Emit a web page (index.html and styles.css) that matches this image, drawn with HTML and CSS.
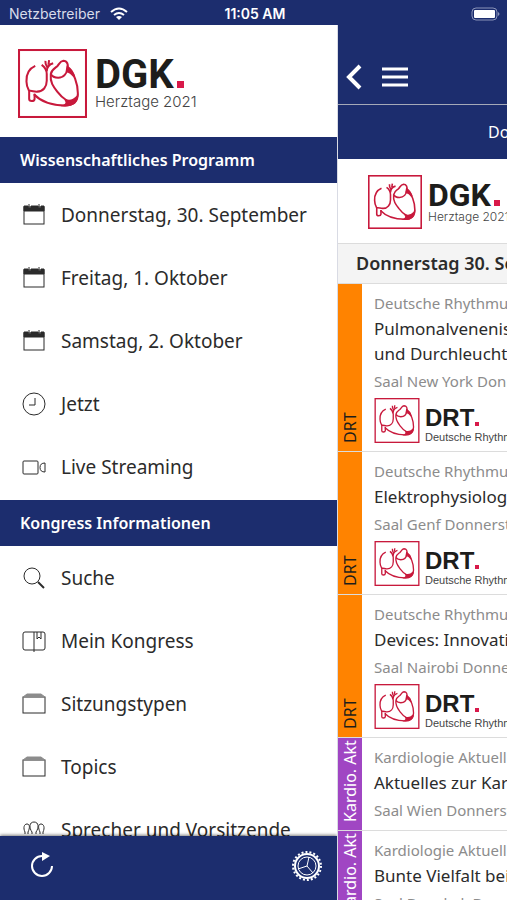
FILE: index.html
```
<!DOCTYPE html>
<html lang="de">
<head>
    <meta charset="UTF-8">
    <title>DGK Herztage 2021</title>
    <meta name="viewport" content="width=device-width, initial-scale=1.0">
    <link rel="stylesheet" href="styles.css">
</head>
<body>

<!-- Symbole, die mehrfach verwendet werden -->
<svg class="symbols" aria-hidden="true">
    <symbol id="heart" viewBox="12 14 204 204">
        <rect x="15" y="17" width="198" height="198"/>
        <path d="M63 64C45 72 36 90 37 110c0 14 5 22 8 28v24c0 8 15 8 16 0v-16"/>
        <path d="M45 138c8 -2 14 3 24 2c17 0 28 -14 28 -32V88c0 -12 -5 -20 -15 -27"/>
        <path d="M93 49c-1 8 2 14 6 20M116 56c-10 3 -19 10 -19 24M104 47l-2 14"/>
        <path d="M109 88c2 -12 10 -16 18 -22c6 -5 8 -16 19 -17c12 0 15 12 13 22c-2 15 -12 28 -28 28c-10 0 -18 -3 -22 -11z"/>
        <path d="M109 90c-3 22 8 36 19 50c9 12 18 20 29 27"/>
        <path d="M159 69c18 14 30 48 30 76c0 24 -12 36 -38 36c-42 0 -72 -12 -92 -33"/>
        <path class="fill" d="M152 165c12 4 26 0 35 -10c-2 17 -14 27 -38 26c7 -4 9 -10 3 -16zM158 67c10 6 16 16 20 28c-8 -10 -14 -14 -22 -16z"/>
    </symbol>
    <symbol id="calendar" viewBox="0 0 24 24">
        <rect x="2" y="4" width="20" height="17"/>
        <path class="fill" d="M2 3h4v2h3V3h7v2h3V3h3v5H2z"/>
        <path d="M7 1v4M17 1v4"/>
    </symbol>
    <symbol id="folder" viewBox="0 0 24 24">
        <rect x="1" y="5" width="22" height="16"/>
        <path class="grey" d="M1 5l4 -3h14l4 3z"/>
    </symbol>
</svg>

<header class="statusbar">
    <span class="carrier">Netzbetreiber
        <svg viewBox="0 0 18 14" aria-hidden="true">
            <path d="M1 5q8 -7 16 0M4 8q5 -4 10 0"/>
            <path class="fill" d="M6 10q3 -2 6 0l-3 3z"/>
        </svg>
    </span>
    <time>11:05 AM</time>
    <svg class="battery" viewBox="0 0 30 14" aria-hidden="true">
        <rect class="shell" x="1" y="1" width="25" height="12" rx="4"/>
        <rect class="charge" x="3" y="3" width="21" height="8" rx="1"/>
        <path class="cap" d="M27 5q3 2 0 4z"/>
    </svg>
</header>

<div class="app">
    <aside class="drawer">
        <div class="brand">
            <svg class="heart" aria-hidden="true"><use href="#heart"/></svg>
            <div>
                <strong>DGK</strong>
                <span>Herztage 2021</span>
            </div>
        </div>

        <nav class="menu">
            <h2>Wissenschaftliches Programm</h2>
            <ul>
                <li><a href="#"><svg class="icon" aria-hidden="true"><use href="#calendar"/></svg>Donnerstag, 30. September</a></li>
                <li><a href="#"><svg class="icon" aria-hidden="true"><use href="#calendar"/></svg>Freitag, 1. Oktober</a></li>
                <li><a href="#"><svg class="icon" aria-hidden="true"><use href="#calendar"/></svg>Samstag, 2. Oktober</a></li>
                <li><a href="#"><svg class="icon" viewBox="0 0 24 24" aria-hidden="true"><circle cx="12" cy="12" r="11"/><path d="M13 6v7H7"/></svg>Jetzt</a></li>
                <li><a href="#"><svg class="icon" viewBox="0 0 24 24" aria-hidden="true"><rect x="1" y="6" width="15" height="13" rx="1"/><path d="M23 8v9q-5 0 -5 -4.500t5 -4.500z"/></svg>Live Streaming</a></li>
            </ul>
            <h2>Kongress Informationen</h2>
            <ul>
                <li><a href="#"><svg class="icon" viewBox="0 0 24 24" aria-hidden="true"><circle cx="10" cy="10" r="8"/><path class="handle" d="M16 16l6 6"/></svg>Suche</a></li>
                <li><a href="#"><svg class="icon" viewBox="0 0 24 24" aria-hidden="true"><rect x="1" y="3" width="22" height="18" rx="2"/><path d="M12 3v20M15 3v7l2 -2l2 2V3"/></svg>Mein Kongress</a></li>
                <li><a href="#"><svg class="icon" aria-hidden="true"><use href="#folder"/></svg>Sitzungstypen</a></li>
                <li><a href="#"><svg class="icon" aria-hidden="true"><use href="#folder"/></svg>Topics</a></li>
                <li><a href="#"><svg class="icon" viewBox="0 0 24 24" aria-hidden="true"><path d="M10 16v-2c-3 -4 -3 -10 2 -10s5 6 2 10v2M3 16v-2c-2 -4 -1 -8 2 -8s3 4 1 8v2M21 16v-2c2 -4 1 -8 -2 -8s-3 4 -1 8v2"/></svg>Sprecher und Vorsitzende</a></li>
            </ul>
        </nav>

        <footer class="toolbar">
            <button type="button" aria-label="Aktualisieren">
                <svg viewBox="0 0 32 32"><path d="M26 16a10 10 0 1 1 -10 -10"/><path class="fill" d="M16 2l8 4l-8 5z"/></svg>
            </button>
            <button type="button" aria-label="Einstellungen">
                <svg viewBox="0 0 32 32">
                    <circle class="teeth" cx="16" cy="16" r="14"/>
                    <circle cx="16" cy="16" r="12"/>
                    <circle class="thin" cx="16" cy="16" r="9"/>
                    <path class="thin" d="M16 16l2 -9M16 16l-9 3M16 16l6 7"/>
                </svg>
            </button>
        </footer>
    </aside>

    <main class="page">
        <div class="navbar">
            <button type="button" aria-label="Zurück">
                <svg class="back" viewBox="0 0 16 26"><path d="M14 2L3 13l11 11"/></svg>
            </button>
            <button type="button" aria-label="Menü">
                <svg class="burger" viewBox="0 0 26 20"><path d="M0 2h26M0 10h26M0 18h26"/></svg>
            </button>
        </div>
        <div class="daybar">Donnerstag</div>
        <div class="brand small">
            <svg class="heart" aria-hidden="true"><use href="#heart"/></svg>
            <div>
                <strong>DGK</strong>
                <span>Herztage 2021</span>
            </div>
        </div>
        <h1>Donnerstag 30. September</h1>

        <article class="session drt">
            <div class="tag">DRT</div>
            <div class="info">
                <p>Deutsche Rhythmus Tage</p>
                <h3>Pulmonalvenenisolation<br>und Durchleuchtung</h3>
                <p>Saal New York Donnerstag</p>
                <div class="brand mini">
                    <svg class="heart" aria-hidden="true"><use href="#heart"/></svg>
                    <div>
                        <strong>DRT</strong>
                        <span>Deutsche Rhythmus Tage</span>
                    </div>
                </div>
            </div>
        </article>
        <article class="session drt">
            <div class="tag">DRT</div>
            <div class="info">
                <p>Deutsche Rhythmus Tage</p>
                <h3>Elektrophysiologie</h3>
                <p>Saal Genf Donnerstag</p>
                <div class="brand mini">
                    <svg class="heart" aria-hidden="true"><use href="#heart"/></svg>
                    <div>
                        <strong>DRT</strong>
                        <span>Deutsche Rhythmus Tage</span>
                    </div>
                </div>
            </div>
        </article>
        <article class="session drt">
            <div class="tag">DRT</div>
            <div class="info">
                <p>Deutsche Rhythmus Tage</p>
                <h3>Devices: Innovationen</h3>
                <p>Saal Nairobi Donnerstag</p>
                <div class="brand mini">
                    <svg class="heart" aria-hidden="true"><use href="#heart"/></svg>
                    <div>
                        <strong>DRT</strong>
                        <span>Deutsche Rhythmus Tage</span>
                    </div>
                </div>
            </div>
        </article>
        <article class="session kardio">
            <div class="tag">Kardio. Akt</div>
            <div class="info">
                <p>Kardiologie Aktuell</p>
                <h3>Aktuelles zur Kardiologie</h3>
                <p>Saal Wien Donnerstag</p>
            </div>
        </article>
        <article class="session kardio">
            <div class="tag">Kardio. Akt</div>
            <div class="info">
                <p>Kardiologie Aktuell</p>
                <h3>Bunte Vielfalt bei</h3>
                <p>Saal Bangkok Donnerstag</p>
            </div>
        </article>
    </main>
</div>

</body>
</html>
```
FILE: styles.css
```
* {
    box-sizing: border-box;
}

body {
    margin: 0;
    height: 100vh;
    display: flex;
    flex-direction: column;
    overflow: hidden;
    background-color: #fff;
    color: #2b2b2b;
    font-family: "Noto Sans", "Open Sans", sans-serif;
}

h1, h2, h3, p, ul {
    margin: 0;
    padding: 0;
}

svg {
    display: block;
    fill: none;
    stroke: currentColor;
}

svg .fill {
    fill: currentColor;
}

button {
    padding: 0;
    border: none;
    background: none;
    color: #fff;
    cursor: pointer;
}

.symbols {
    position: absolute;
    width: 0;
    height: 0;
}

/* Statusleiste */
.statusbar {
    flex: none;
    display: grid;
    grid-template-columns: 1fr auto 1fr;
    align-items: center;
    height: 25px;
    padding: 2px 6px 0 9px;
    background-color: #1c2d6e;
    color: #fff;
    font-family: Inter, sans-serif;
    font-size: 14px;
}

.statusbar time {
    font-weight: 600;
}

.carrier {
    display: flex;
    align-items: center;
    gap: 10px;
    color: #d8dcea;
}

.carrier svg {
    width: 18px;
    height: 14px;
    color: #fff;
    stroke-width: 2;
}

.carrier .fill {
    stroke: none;
}

.battery {
    justify-self: end;
    width: 30px;
    height: 14px;
}

.battery .shell {
    stroke: #8a94b8;
}

.battery .charge {
    fill: #fff;
    stroke: none;
}

.battery .cap {
    fill: #8a94b8;
    stroke: none;
}

.app {
    flex: 1;
    min-height: 0;
    display: grid;
    grid-template-columns: 1fr 170px;
}

/* Seitenmenü */
.drawer {
    display: flex;
    flex-direction: column;
    min-width: 0;
    min-height: 0;
}

.brand {
    flex: none;
    display: flex;
    gap: 8px;
    height: 112px;
    padding: 24px 18px;
    font-family: Inter, sans-serif;
    color: #1d1d1b;
    white-space: nowrap;
}

.brand strong,
.brand span {
    display: block;
}

.brand strong {
    margin-top: 8px;
    font-family: Roboto, sans-serif;
    font-size: 40px;
    line-height: 36px;
}

/* roter Punkt hinter dem Kürzel */
.brand strong::after {
    content: "";
    display: inline-block;
    width: 7px;
    height: 7px;
    margin-left: 3px;
    background-color: #d8194a;
}

.brand span {
    font-size: 15px;
    line-height: 18px;
    font-weight: 300;
    color: #444;
}

.heart {
    flex: none;
    width: 69px;
    height: 69px;
    color: #c8193c;
    stroke-width: 6;
}

.menu {
    flex: 1;
    min-height: 0;
    overflow: hidden;
}

.menu h2 {
    padding: 0 20px;
    background-color: #1c2d6e;
    color: #fff;
    font-size: 16px;
    line-height: 46px;
    font-weight: 600;
}

.menu ul {
    padding-bottom: 2px;
    list-style: none;
}

.menu a {
    display: flex;
    align-items: center;
    gap: 15px;
    height: 63px;
    padding: 0 22px;
    color: inherit;
    font-size: 19px;
    text-decoration: none;
    white-space: nowrap;
}

.icon {
    flex: none;
    width: 24px;
    height: 24px;
}

.icon .handle {
    stroke-width: 2;
}

.grey {
    fill: #8c8c8c;
    stroke: #8c8c8c;
}

.toolbar {
    flex: none;
    display: flex;
    justify-content: space-between;
    align-items: center;
    height: 64px;
    padding: 0 14px 4px 26px;
    background-color: #1c2d6e;
    box-shadow: 0 -1px 3px rgba(0, 0, 0, 0.5);
}

.toolbar svg {
    width: 32px;
    height: 32px;
    stroke-width: 2;
}

.toolbar .fill {
    stroke: none;
}

.toolbar .thin {
    stroke-width: 1;
}

.teeth {
    stroke-dasharray: 2 2;
}

/* Programmseite */
.page {
    min-width: 0;
    overflow: hidden;
    border-left: 1px solid #d9dbe4;
    white-space: nowrap;
}

.navbar {
    display: flex;
    align-items: center;
    gap: 20px;
    height: 80px;
    padding: 24px 8px 0;
    background-color: #1c2d6e;
    border-bottom: 1px solid #a5a9b8;
}

.back {
    width: 16px;
    height: 26px;
    stroke-width: 4;
}

.burger {
    width: 26px;
    height: 20px;
    stroke-width: 3;
}

.daybar {
    height: 54px;
    padding-left: 150px;
    background-color: #1c2d6e;
    color: #fff;
    font-size: 16px;
    line-height: 54px;
}

.brand.small {
    gap: 6px;
    height: 84px;
    padding: 16px 30px;
}

.small .heart {
    width: 54px;
    height: 54px;
}

.small strong {
    margin-top: 6px;
    font-size: 32px;
    line-height: 28px;
}

.small strong::after {
    width: 6px;
    height: 6px;
}

.small span {
    font-size: 12px;
    line-height: 16px;
}

.page h1 {
    padding-left: 18px;
    background-color: #f4f4f4;
    border: solid #dcdcdc;
    border-width: 1px 0;
    font-size: 18px;
    line-height: 39px;
    font-weight: 600;
}

.session {
    display: flex;
    border-bottom: 1px solid #dcdcdc;
}

.tag {
    flex: none;
    width: 24px;
    padding-top: 8px;
    font-size: 16px;
    line-height: 24px;
    writing-mode: vertical-rl;
    transform: rotate(180deg);
}

.drt .tag {
    background-color: #ff8300;
    color: #1d1d1b;
}

.kardio .tag {
    background-color: #a046c3;
    color: #fff;
}

.info {
    padding: 8px 12px;
}

.info p {
    color: #8c8c8c;
    font-size: 15px;
    line-height: 22px;
}

.info h3 {
    margin: 2px 0 4px;
    font-size: 17px;
    line-height: 25px;
    font-weight: 400;
}

.brand.mini {
    gap: 5px;
    height: 45px;
    margin-top: 6px;
    padding: 0;
}

.mini .heart {
    width: 46px;
    height: 45px;
}

.mini strong {
    margin-top: 8px;
    font-family: "Liberation Sans", sans-serif;
    font-size: 24px;
    line-height: 24px;
}

.mini strong::after {
    width: 4px;
    height: 4px;
    margin-left: 1px;
}

.mini span {
    font-family: "Liberation Sans", sans-serif;
    font-size: 11px;
    line-height: 14px;
    font-weight: 400;
}

.kardio .info {
    padding-bottom: 9px;
}
```
